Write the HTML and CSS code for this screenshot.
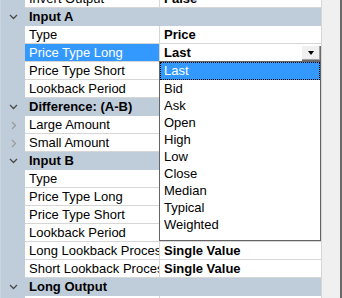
FILE: index.html
```html
<!DOCTYPE html>
<html>
<head>
<meta charset="utf-8">
<link rel="stylesheet" href="styles.css">
</head>
<body>
<div class="grid">
  <div class="rows">
    <div class="row first"><div class="margin"></div><div class="label">Invert Output</div><div class="value bold">False</div></div>
    <div class="row cat"><div class="margin"><svg class="chev" width="9" height="6" viewBox="0 0 9 6"><polyline points="1,1 4.5,4.5 8,1" fill="none" stroke="#4a4a4a" stroke-width="1.3"/></svg></div><div class="cat-label">Input A</div></div>
    <div class="row"><div class="margin"></div><div class="label">Type</div><div class="value bold">Price</div></div>
    <div class="row"><div class="margin"></div><div class="label selected">Price Type Long</div><div class="value bold combo"><span class="combo-text">Last</span><span class="combo-btn"><span class="arrow"></span></span></div></div>
    <div class="row"><div class="margin"></div><div class="label">Price Type Short</div><div class="value"></div></div>
    <div class="row"><div class="margin"></div><div class="label">Lookback Period</div><div class="value"></div></div>
    <div class="row cat"><div class="margin"><svg class="chev" width="9" height="6" viewBox="0 0 9 6"><polyline points="1,1 4.5,4.5 8,1" fill="none" stroke="#4a4a4a" stroke-width="1.3"/></svg></div><div class="cat-label">Difference: (A-B)</div></div>
    <div class="row"><div class="margin"><svg class="chev" width="6" height="9" viewBox="0 0 6 9"><polyline points="1,1 4.5,4.5 1,8" fill="none" stroke="#9a9a9a" stroke-width="1.3"/></svg></div><div class="label">Large Amount</div><div class="value"></div></div>
    <div class="row"><div class="margin"><svg class="chev" width="6" height="9" viewBox="0 0 6 9"><polyline points="1,1 4.5,4.5 1,8" fill="none" stroke="#9a9a9a" stroke-width="1.3"/></svg></div><div class="label">Small Amount</div><div class="value"></div></div>
    <div class="row cat"><div class="margin"><svg class="chev" width="9" height="6" viewBox="0 0 9 6"><polyline points="1,1 4.5,4.5 8,1" fill="none" stroke="#4a4a4a" stroke-width="1.3"/></svg></div><div class="cat-label">Input B</div></div>
    <div class="row"><div class="margin"></div><div class="label">Type</div><div class="value"></div></div>
    <div class="row"><div class="margin"></div><div class="label">Price Type Long</div><div class="value"></div></div>
    <div class="row"><div class="margin"></div><div class="label">Price Type Short</div><div class="value"></div></div>
    <div class="row"><div class="margin"></div><div class="label">Lookback Period</div><div class="value"></div></div>
    <div class="row"><div class="margin"></div><div class="label">Long Lookback Process</div><div class="value bold">Single Value</div></div>
    <div class="row"><div class="margin"></div><div class="label">Short Lookback Process</div><div class="value bold">Single Value</div></div>
    <div class="row cat"><div class="margin"><svg class="chev" width="9" height="6" viewBox="0 0 9 6"><polyline points="1,1 4.5,4.5 8,1" fill="none" stroke="#4a4a4a" stroke-width="1.3"/></svg></div><div class="cat-label">Long Output</div></div>
    <div class="row"><div class="margin"></div><div class="label"></div><div class="value"></div></div>
  </div>
  <div class="scrollbar"></div>
  <div class="edge"></div>
  <ul class="dropdown">
    <li class="active">Last</li>
    <li>Bid</li>
    <li>Ask</li>
    <li>Open</li>
    <li>High</li>
    <li>Low</li>
    <li>Close</li>
    <li>Median</li>
    <li>Typical</li>
    <li>Weighted</li>
  </ul>
</div>
</body>
</html>
```

FILE: styles.css
```css
html, body {
  margin: 0;
  padding: 0;
  background: #ffffff;
}

.grid {
  position: relative;
  display: flex;
  width: 342px;
  height: 298px;
  overflow: hidden;
  font-family: "Liberation Sans", Arial, sans-serif;
  font-size: 13px;
  color: #000;
}

.rows {
  width: 322px;
  display: flex;
  flex-direction: column;
  background: #bfcddb;
  border-left: 1px solid #cdd6df;
  box-sizing: border-box;
}

.row {
  display: flex;
  flex: 0 0 18px;
  height: 18px;
}

.row.first {
  margin-top: -10px;
}

.margin {
  width: 24px;
  flex: 0 0 24px;
  background: #bfcddb;
  display: flex;
  align-items: center;
  justify-content: center;
}

.margin .chev {
  display: block;
  margin-left: 1px;
}

.label {
  width: 130px;
  flex: 0 0 130px;
  height: 17px;
  line-height: 17px;
  padding-left: 4px;
  background: #fff;
  border-bottom: 1px solid #d6d6d6;
  border-right: 1px solid #d6d6d6;
  white-space: nowrap;
  overflow: hidden;
}

.label.selected {
  background: #3399ff;
  color: #fff;
}

.value {
  width: 157px;
  flex: 0 0 157px;
  height: 17px;
  line-height: 17px;
  padding-left: 4px;
  background: #fff;
  border-bottom: 1px solid #d6d6d6;
  border-right: 1px solid #d6d6d6;
  white-space: nowrap;
  overflow: hidden;
}

.bold {
  font-weight: bold;
}

.combo {
  display: flex;
  align-items: flex-start;
}

.combo-text {
  flex: 1;
}

.combo-btn {
  width: 20px;
  height: 16px;
  margin-top: 1px;
  background: #f0f0f0;
  box-shadow: inset 1px 1px #ffffff, inset -1px -1px #6a6a6a, inset -2px -2px #a0a0a0;
  display: flex;
  align-items: center;
  justify-content: center;
}

.arrow {
  width: 0;
  height: 0;
  border-left: 3.5px solid transparent;
  border-right: 3.5px solid transparent;
  border-top: 4px solid #000;
  margin-top: -1px;
}

.cat {
  background: #bfcddb;
}

.cat-label {
  width: 292px;
  flex: 0 0 292px;
  height: 18px;
  line-height: 18px;
  padding-left: 4px;
  font-weight: bold;
  border-right: 1px solid #d6d6d6;
  white-space: nowrap;
}

.scrollbar {
  width: 18px;
  flex: 0 0 18px;
  background: #f0f0f0;
}

.edge {
  width: 2px;
  flex: 0 0 2px;
  background: #6a6a6a;
}

.dropdown {
  position: absolute;
  left: 159px;
  top: 61px;
  width: 162px;
  height: 180px;
  box-sizing: border-box;
  margin: 0;
  padding: 0;
  list-style: none;
  background: #fff;
  border: 1px solid #646464;
  z-index: 2;
}

.dropdown li {
  height: 17px;
  line-height: 17px;
  padding-left: 4px;
  white-space: nowrap;
}

.dropdown li.active {
  height: 18px;
  line-height: 18px;
  background: #3399ff;
  color: #fff;
  outline: 1px dotted #000;
  outline-offset: -1px;
}
```
